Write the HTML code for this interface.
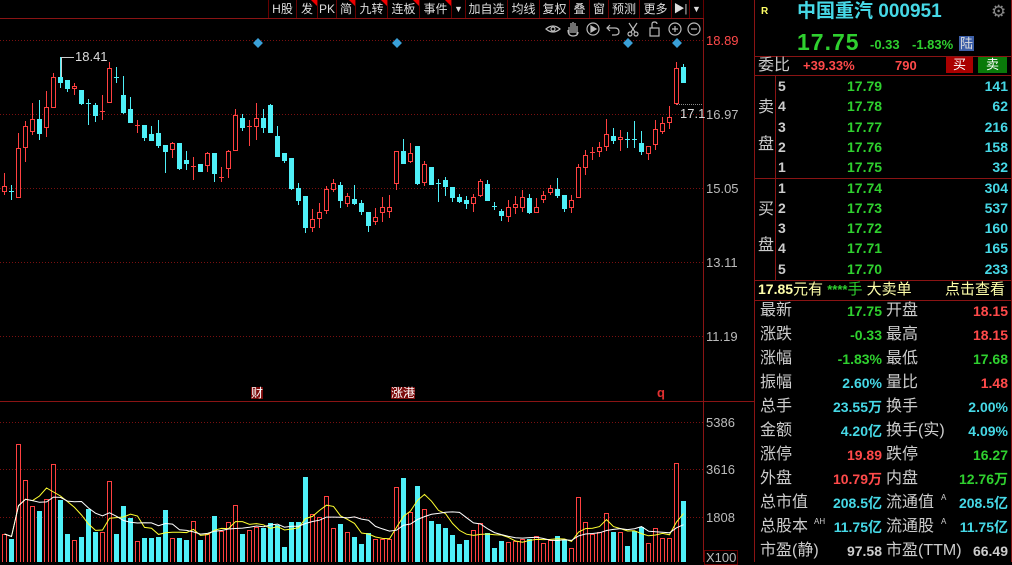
<!DOCTYPE html>
<html><head><meta charset="utf-8">
<style>
*{margin:0;padding:0;box-sizing:border-box}
body{width:1012px;height:562px;background:#000;overflow:hidden;position:relative;font-family:"Liberation Sans","Noto Sans CJK SC",sans-serif;}
#c{position:absolute;left:0;top:0}
.p{position:absolute;white-space:nowrap;line-height:1}
.tb{position:absolute;top:0;height:18px;font-size:12px;color:#ddd;line-height:18px;text-align:center;border-right:1px solid #600;overflow:hidden}
.tri{position:absolute;top:0;right:0;width:0;height:0;border-top:6px solid #e00;border-left:6px solid transparent}
.r{color:#ff4a4a}.g{color:#2fd02f}.cy{color:#46d8e6}.w{color:#ccc}.y{color:#ffff66}
.lab{font-size:16px;color:#ccc}
.num{font-size:14px;font-weight:bold}
</style></head><body>
<svg id="c" width="1012" height="562" xmlns="http://www.w3.org/2000/svg"></svg>

<div class="tb" style="left:268px;width:29px;border-left:1px solid #600">H股</div>
<div class="tb" style="left:297px;width:21px">发<span class="tri"></span></div>
<div class="tb" style="left:318px;width:19px">PK</div>
<div class="tb" style="left:337px;width:19px">简<span class="tri"></span></div>
<div class="tb" style="left:356px;width:32px">九转<span class="tri"></span></div>
<div class="tb" style="left:388px;width:32px">连板<span class="tri"></span></div>
<div class="tb" style="left:420px;width:32px">事件<span class="tri"></span></div>
<div class="tb" style="left:452px;width:14px;font-size:9px">▼</div>
<div class="tb" style="left:466px;width:42px">加自选</div>
<div class="tb" style="left:508px;width:32px">均线</div>
<div class="tb" style="left:540px;width:30px">复权</div>
<div class="tb" style="left:570px;width:20px">叠</div>
<div class="tb" style="left:590px;width:19px">窗</div>
<div class="tb" style="left:609px;width:31px">预测</div>
<div class="tb" style="left:640px;width:32px">更多</div>
<div class="tb" style="left:672px;width:18px;font-size:11px">▶|</div>
<div class="tb" style="left:690px;width:14px;font-size:9px">▼</div>

<div class="p r" style="left:706px;top:34px;font-size:13px">18.89</div>
<div class="p w" style="left:706px;top:108px;font-size:13px;color:#bbb">16.97</div>
<div class="p w" style="left:706px;top:182px;font-size:13px;color:#bbb">15.05</div>
<div class="p w" style="left:706px;top:256px;font-size:13px;color:#bbb">13.11</div>
<div class="p w" style="left:706px;top:330px;font-size:13px;color:#bbb">11.19</div>
<div class="p" style="left:706px;top:416px;font-size:13px;color:#bbb">5386</div>
<div class="p" style="left:706px;top:463px;font-size:13px;color:#bbb">3616</div>
<div class="p" style="left:706px;top:511px;font-size:13px;color:#bbb">1808</div>
<div class="p" style="left:704px;top:550px;font-size:13px;color:#bbb;border:1px solid #600;padding:0 1px">X100</div>
<div class="p" style="left:75px;top:50px;font-size:13px;color:#ddd">18.41</div>
<div class="p" style="left:680px;top:107px;font-size:13px;color:#ddd">17.1</div>
<div class="p" style="left:251px;top:387px;font-size:12px;color:#fff;background:#7a0a0a">财</div>
<div class="p" style="left:391px;top:387px;font-size:12px;color:#fff;background:#7a0a0a">涨港</div>
<div class="p" style="left:657px;top:386px;font-size:13px;color:#e03030;font-weight:bold">q</div>

<div class="p y" style="left:761px;top:7px;font-size:10px;font-weight:bold">R</div>
<div class="p cy" style="left:797px;top:2px;font-size:19px;font-weight:bold">中国重汽 000951</div>
<div class="p" style="left:991px;top:3px;font-size:17px;color:#888">⚙</div>
<div class="p g" style="left:797px;top:31px;font-size:23px;font-weight:bold;letter-spacing:1px">17.75</div>
<div class="p g" style="left:870px;top:38px;font-size:13px;font-weight:bold">-0.33</div>
<div class="p g" style="left:912px;top:38px;font-size:13px;font-weight:bold">-1.83%</div>
<div class="p" style="left:959px;top:36px;font-size:13px;color:#ddd;background:#3d5fa8;padding:1px 1px">陆</div>

<div class="p lab" style="left:758px;top:58px">委比</div>
<div class="p r num" style="left:803px;top:59px;font-size:13px">+39.33%</div>
<div class="p r num" style="left:895px;top:59px;font-size:13px">790</div>
<div class="p" style="left:946px;top:57px;width:27px;height:16px;background:#a00;color:#fff;font-size:13px;text-align:center;line-height:16px">买</div>
<div class="p" style="left:978px;top:57px;width:29px;height:16px;background:#0a7a0a;color:#fff;font-size:13px;text-align:center;line-height:16px">卖</div>

<div class="p lab" style="left:758px;top:100px">卖</div>
<div class="p lab" style="left:758px;top:137px">盘</div>
<div class="p lab" style="left:758px;top:202px">买</div>
<div class="p lab" style="left:758px;top:238px">盘</div>
<div id="ob"></div>

<div class="p" style="left:758px;top:282px;font-size:15px;color:#ffffaa"><b style="font-size:14px">17.85</b>元有 <span class="g" style="font-size:13px;font-weight:bold">****</span><span class="g">手</span> 大卖单</div>
<div class="p" style="left:945px;top:282px;font-size:15px;color:#ffffaa">点击查看</div>
<div id="st"></div>

<script>
var h='',svg=document.getElementById('c');
function L(x1,y1,x2,y2,c,d){h+='<line x1="'+x1+'" y1="'+y1+'" x2="'+x2+'" y2="'+y2+'" stroke="'+c+'" stroke-width="1"'+(d?' stroke-dasharray="'+d+'"':'')+'/>';}
[40,114,188,262,336].forEach(function(y){L(0,y+.5,703,y+.5,'#7a1010','1 2');});
[422,469,517].forEach(function(y){L(0,y+.5,703,y+.5,'#7a1010','1 2');});
L(0,18.5,703,18.5,'#8a1414');L(0,401.5,754,401.5,'#8a1414');
L(703.5,0,703.5,562,'#8a1414');L(754.5,0,754.5,562,'#8a1414');L(1011.5,0,1011.5,562,'#8a1414');
[56,75,178,280,300].forEach(function(y){L(755,y+.5,1012,y+.5,'#8a1414');});
L(775.5,75,775.5,280,'#8a1414');
var C=[['r',186,191,173,195],['c',191,191,185,200],['r',148,197,133,197],['r',126,147,121,162],['r',119,131,103,135],['c',119,133,100,140],['r',107,127,91,137],['r',77,107,73,107],['c',77,82,57,88],['c',80,88,80,92],['r',86,88,83,95],['c',90,103,90,105],['c',103,103,99,125],['c',105,115,103,122],['r',111,111,95,120],['r',68,102,62,102],['c',77,77,67,83],['c',95,112,76,114],['c',109,122,97,123],['r',125,125,120,133],['c',125,137,125,141],['c',134,140,126,141],['c',133,145,120,148],['c',145,151,145,173],['r',143,149,142,158],['c',143,168,143,170],['c',160,163,151,170],['r',166,166,157,180],['c',164,171,164,172],['r',153,165,152,172],['c',153,173,153,182],['r',177,177,167,182],['r',151,168,150,178],['r',115,150,109,150],['c',118,127,114,131],['r',126,126,120,146],['r',118,126,103,140],['c',118,127,109,133],['c',105,132,104,132],['c',136,156,126,156],
['c',153,160,153,163],['c',158,188,158,190],['c',188,200,183,205],['c',196,227,196,233],['r',219,227,209,232],['r',212,218,203,228],['r',189,210,186,214],['r',183,189,179,192],['c',185,200,182,208],['r',196,203,193,207],['c',199,203,185,205],['c',203,211,200,215],['c',212,225,212,232],['r',217,221,208,225],['r',207,212,197,222],['r',207,211,195,218],['r',151,183,151,190],['c',151,163,139,164],['r',153,161,143,163],['c',146,183,146,185],['r',164,182,161,186],['c',167,184,167,185],['c',183,183,179,202],['c',180,186,177,196],['c',187,197,187,202],['c',197,201,194,203],['c',200,203,196,209],['r',197,203,194,212],['r',181,195,179,197],['c',184,200,180,201],['c',206,206,202,210],['c',211,215,209,221],['r',207,216,200,222],['r',204,207,196,214],['r',197,207,190,212],['c',198,212,194,214],['r',207,212,198,213],['r',195,199,191,203],['r',188,192,185,195],['c',189,195,178,198],['c',195,208,195,212],['r',200,207,195,213],['r',167,197,164,197],['r',155,167,150,175],['r',152,152,147,160],['r',147,151,142,157],['r',134,146,119,151],['c',136,140,128,144],['r',137,139,130,151],['c',139,139,132,148],['c',139,139,121,148],['c',143,151,131,155],['r',146,153,146,160],['r',129,144,120,150],['r',123,131,117,134],['r',117,122,106,129],['r',68,103,62,105],['c',67,82,64,82]];
var V=[534,539,444,480,506,511,499,464,500,534,540,537,509,532,532,481,534,506,518,541,538,538,537,510,538,538,540,521,540,534,516,531,522,505,534,530,527,528,523,525,547,522,522,477,514,517,496,528,524,532,537,544,533,539,539,539,487,478,512,486,509,521,524,528,535,544,540,530,523,533,548,541,542,541,539,539,536,543,540,536,540,548,497,522,534,532,513,532,532,546,531,527,543,528,538,538,463,501];
var RC='#ff4040',CC='#4ff0f8';
C.forEach(function(k,i){var x=4+7*i,col=k[0]=='r'?RC:CC;
 L(x+.5,k[3],x+.5,k[4],col);
 var t=k[1],b=k[2];
 if(b-t<1){L(x-2,t+.5,x+3,t+.5,col);}
 else if(k[0]=='r'){h+='<rect x="'+(x-1.5)+'" y="'+(t+.5)+'" width="4" height="'+(b-t)+'" fill="#000" stroke="'+col+'"/>';}
 else{h+='<rect x="'+(x-2)+'" y="'+t+'" width="5" height="'+(b-t+1)+'" fill="'+col+'"/>';}
 var v=V[i];
 if(k[0]=='r')h+='<rect x="'+(x-1.5)+'" y="'+(v+.5)+'" width="4" height="'+(570-v)+'" fill="#000" stroke="'+RC+'"/>';
 else h+='<rect x="'+(x-2)+'" y="'+v+'" width="5" height="'+(570-v)+'" fill="'+CC+'"/>';
});
function ma(n,c){var p='';for(var i=0;i<V.length;i++){var s=0,m=0;for(var j=Math.max(0,i-n+1);j<=i;j++){s+=565-V[j];m++;}p+=(i?'L':'M')+(4+7*i+.5)+' '+(565-s/m).toFixed(1);}h+='<path d="'+p+'" fill="none" stroke="'+c+'" stroke-width="1"/>';}
ma(5,'#ffff30');ma(10,'#ffffff');
L(61.5,57,61.5,77,'#ccc');L(61,57.5,74,57.5,'#ccc');
L(677,104.5,703,104.5,'#888','1 1');
[258,397,628,677].forEach(function(x){h+='<rect x="'+(x-3.5)+'" y="'+(43-3.5)+'" width="7" height="7" fill="#3aa0d8" transform="rotate(45 '+x+' 43)"/>';});
var g='#bbb';
h+='<g stroke="'+g+'" fill="none" stroke-width="1.2">';
h+='<path d="M546 29 Q553 23 560 29 Q553 35 546 29Z"/><circle cx="553" cy="29" r="2"/>';
h+='<path d="M569 34 L569 27 M571 33 L571 23 M573 33 L573 22 M575 33 L575 23 M577 34 L577 26 M568 30 Q568 36 573 36 Q578 36 578 32"/>';
h+='<circle cx="593" cy="29" r="6"/><path d="M591 26 L596 29 L591 32Z" fill="'+g+'"/>';
h+='<path d="M610 25 L607 28 L610 31 M607 28 L615 28 Q619 28 619 32 Q619 35 615 35 L612 35"/>';
h+='<circle cx="630" cy="34" r="2"/><circle cx="636" cy="34" r="2"/><path d="M631 32 L637 23 M635 32 L629 23"/>';
h+='<rect x="650" y="28" width="9" height="8"/><path d="M652 28 L652 24 Q652 22 654.5 22 Q657 22 657 24"/>';
h+='<circle cx="675" cy="29" r="6"/><path d="M672 29 L678 29 M675 26 L675 32"/>';
h+='<circle cx="694" cy="29" r="6"/><path d="M691 29 L697 29"/></g>';
svg.innerHTML=h;
var ob=[['5','17.79','141'],['4','17.78','62'],['3','17.77','216'],['2','17.76','158'],['1','17.75','32'],['1','17.74','304'],['2','17.73','537'],['3','17.72','160'],['4','17.71','165'],['5','17.70','233']];
var ys=[79,99,120,140,160,181,201,221,241,262],o='';
ob.forEach(function(r,i){var y=ys[i];
o+='<div class="p num" style="left:778px;top:'+y+'px;color:#ccc">'+r[0]+'</div>';
o+='<div class="p num g" style="left:847px;top:'+y+'px">'+r[1]+'</div>';
o+='<div class="p num cy" style="right:4px;top:'+y+'px">'+r[2]+'</div>';});
document.getElementById('ob').innerHTML=o;
var st=[['最新','17.75','g','开盘','18.15','r'],['涨跌','-0.33','g','最高','18.15','r'],['涨幅','-1.83%','g','最低','17.68','g'],['振幅','2.60%','cy','量比','1.48','r'],['总手','23.55万','cy','换手','2.00%','cy'],['金额','4.20亿','cy','换手(实)','4.09%','cy'],['涨停','19.89','r','跌停','16.27','g'],['外盘','10.79万','r','内盘','12.76万','g'],['总市值','208.5亿','cy','流通值','208.5亿','cy'],['总股本','11.75亿','cy','流通股','11.75亿','cy'],['市盈(静)','97.58','w','市盈(TTM)','66.49','w']];
o='';
st.forEach(function(r,i){var y=303+i*24;
o+='<div class="p lab" style="left:760px;top:'+y+'px">'+r[0]+'</div>';
o+='<div class="p num '+r[2]+'" style="right:130px;top:'+(y+1)+'px">'+r[1]+'</div>';
o+='<div class="p lab" style="left:886px;top:'+y+'px">'+r[3]+'</div>';
o+='<div class="p num '+r[5]+'" style="right:4px;top:'+(y+1)+'px">'+r[4]+'</div>';});
o+='<div class="p" style="left:814px;top:518px;font-size:8px;color:#ccc">AH</div>';
o+='<div class="p" style="left:941px;top:494px;font-size:8px;color:#ccc">A</div>';
o+='<div class="p" style="left:941px;top:518px;font-size:8px;color:#ccc">A</div>';
document.getElementById('st').innerHTML=o;
</script>
</body></html>
